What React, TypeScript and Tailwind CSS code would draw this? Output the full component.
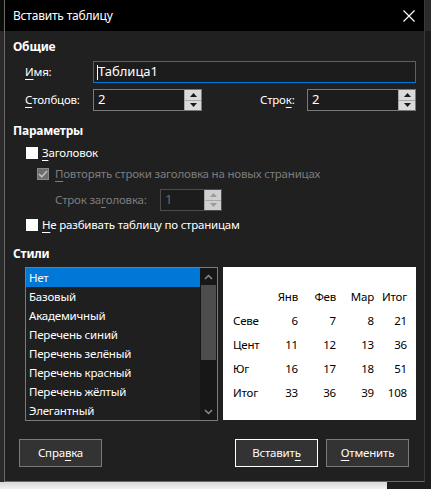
import React from 'react';

const font = { fontFamily: '"Noto Sans", "Open Sans", sans-serif' };

function U({ children }: { children: React.ReactNode }) {
  return <span className="underline underline-offset-[3px] decoration-1">{children}</span>;
}

function Arrow({ up, color }: { up?: boolean; color: string }) {
  return (
    <svg width="7" height="4" viewBox="0 0 7 4">
      {up ? <path d="M0 4 L3.5 0 L7 4 Z" fill={color} /> : <path d="M0 0 L3.5 4 L7 0 Z" fill={color} />}
    </svg>
  );
}

function Spin({ value, className, disabled }: { value: string; className: string; disabled?: boolean }) {
  return (
    <div
      className={`flex h-[22px] border bg-[#1c1c1c] ${disabled ? 'border-[#4d4d4d]' : 'border-[#7a7a7a]'} ${className}`}
    >
      <div className={`flex-1 flex items-center pl-[4px] text-[13px] ${disabled ? 'text-[#6a6a6a]' : 'text-white'}`}>
        {value}
      </div>
      <div className="w-[17px] flex flex-col gap-[1px] bg-[#a8a8a8] border-l border-[#a8a8a8]">
        <div className={`flex-1 flex items-center justify-center ${disabled ? 'bg-[#cfcfcf]' : 'bg-[#dadada]'}`}>
          <Arrow up color={disabled ? '#9a9a9a' : '#1a1a1a'} />
        </div>
        <div className={`flex-1 flex items-center justify-center ${disabled ? 'bg-[#cfcfcf]' : 'bg-[#dadada]'}`}>
          <Arrow color={disabled ? '#9a9a9a' : '#1a1a1a'} />
        </div>
      </div>
    </div>
  );
}

const styles = [
  'Нет',
  'Базовый',
  'Академичный',
  'Перечень синий',
  'Перечень зелёный',
  'Перечень красный',
  'Перечень жёлтый',
  'Элегантный',
];

const table = [
  ['', 'Янв', 'Фев', 'Мар', 'Итог'],
  ['Севе', '6', '7', '8', '21'],
  ['Цент', '11', '12', '13', '36'],
  ['Юг', '16', '17', '18', '51'],
  ['Итог', '33', '36', '39', '108'],
];

function Button({ children, primary, className = '' }: { children: React.ReactNode; primary?: boolean; className?: string }) {
  return (
    <button
      className={`w-[83px] h-[28px] bg-[#333333] text-white text-[11.5px] tracking-[-0.2px] border ${primary ? 'border-white' : 'border-[#7a7a7a]'} ${className}`}
    >
      {children}
    </button>
  );
}

export default function App() {
  return (
    <div className="relative w-[431px] h-[489px] overflow-hidden bg-[#1c1c1c]" style={font}>
      {/* desktop behind */}
      <div className="absolute left-0 top-0 w-[4px] h-[31px] bg-[#0c0c0c]" />
      <div className="absolute left-0 top-[31px] w-[4px] h-[451px] bg-[#2a2a2a]" />
      <div className="absolute left-0 top-[482px] w-[387px] h-[7px] bg-gradient-to-b from-[#d8d8d8] to-[#f0f0f0]" />
      <div className="absolute left-[425px] top-0 w-[6px] h-[31px] bg-[#2b2b2b]" />

      {/* window */}
      <div className="absolute left-[4px] top-0 w-[421px] h-[482px] flex flex-col bg-[#202020] border-l border-r border-b border-l-[#6a6a6a] border-b-[#6a6a6a] border-r-[#3a3a3a]">
        {/* title bar */}
        <div className="h-[31px] bg-black flex items-center justify-between pl-[8px] pr-[9px]">
          <span className="text-white text-[12px] tracking-[-0.2px]">Вставить таблицу</span>
          <svg width="12" height="12" viewBox="0 0 12 12">
            <path d="M0.5 0.5 L11.5 11.5 M11.5 0.5 L0.5 11.5" stroke="white" strokeWidth="1.2" />
          </svg>
        </div>

        <div className="flex flex-col text-white text-[11.5px] tracking-[-0.2px]">
          <div className="h-[20px] mt-[6px] ml-[8px] flex items-center font-bold text-[12px]">Общие</div>

          <div className="h-[22px] mt-[4px] ml-[20px] flex items-center">
            <span className="w-[68px]">
              <U>И</U>мя:
            </span>
            <div className="w-[323px] h-[22px] border border-[#0078d7] bg-[#1c1c1c] flex items-center pl-[3px] text-[13px] tracking-normal">
              <span className="w-[1px] h-[15px] bg-white" />
              Таблица1
            </div>
          </div>

          <div className="h-[22px] mt-[6px] ml-[20px] flex items-center">
            <span className="w-[68px]">
              <U>С</U>толбцов:
            </span>
            <Spin value="2" className="w-[109px]" />
            <span className="ml-[58px] w-[47px]">
              Стро<U>к</U>:
            </span>
            <Spin value="2" className="w-[109px]" />
          </div>

          <div className="h-[20px] mt-[10px] ml-[8px] flex items-center font-bold text-[12px]">Параметры</div>

          <div className="h-[18px] mt-[3px] ml-[21px] flex items-center">
            <span className="w-[12px] h-[12px] bg-white" />
            <span className="ml-[4px]">
              <U>З</U>аголовок
            </span>
          </div>

          <div className="h-[18px] mt-[3px] ml-[32px] flex items-center text-[#7d7d7d]">
            <span className="w-[12px] h-[12px] bg-[#6e6e6e] border border-[#8a8a8a] flex items-center justify-center">
              <svg width="10" height="8" viewBox="0 0 10 8">
                <path d="M1 4 L3.8 6.8 L9 1" stroke="#c8c8c8" strokeWidth="1.3" fill="none" />
              </svg>
            </span>
            <span className="ml-[6px]">
              <U>П</U>овторять строки заголовка на новых страницах
            </span>
          </div>

          <div className="h-[22px] mt-[6px] ml-[50px] flex items-center text-[#7d7d7d]">
            <span className="w-[105px]">
              Строк за<U>г</U>оловка:
            </span>
            <Spin value="1" className="w-[62px]" disabled />
          </div>

          <div className="h-[18px] mt-[5px] ml-[21px] flex items-center">
            <span className="w-[12px] h-[12px] bg-white" />
            <span className="ml-[4px]">
              <U>Н</U>е разбивать таблицу по страницам
            </span>
          </div>

          <div className="h-[20px] mt-[10px] ml-[8px] flex items-center font-bold text-[12px]">Стили</div>

          <div className="h-[154px] mt-[3px] ml-[20px] flex gap-[5px]">
            {/* list */}
            <div className="w-[193px] h-[154px] border border-[#7a7a7a] bg-[#1f1f1f] flex">
              <div className="flex-1 flex flex-col">
                {styles.map((s, i) => (
                  <div
                    key={s}
                    className={`h-[19px] flex items-center pl-[3px] ${i === 0 ? 'bg-[#0078d7]' : ''}`}
                  >
                    {s}
                  </div>
                ))}
              </div>
              <div className="w-[17px] bg-[#171717] flex flex-col items-center">
                <div className="h-[17px] flex items-center justify-center">
                  <svg width="9" height="6" viewBox="0 0 9 6">
                    <path d="M1 5 L4.5 1.5 L8 5" stroke="#8a8a8a" strokeWidth="1.5" fill="none" />
                  </svg>
                </div>
                <div className="w-[15px] h-[75px] bg-[#4d4d4d]" />
                <div className="flex-1" />
                <div className="h-[17px] flex items-center justify-center">
                  <svg width="9" height="6" viewBox="0 0 9 6">
                    <path d="M1 1 L4.5 4.5 L8 1" stroke="#8a8a8a" strokeWidth="1.5" fill="none" />
                  </svg>
                </div>
              </div>
            </div>

            {/* preview */}
            <div className="w-[193px] h-[153px] bg-white pt-[18px] pl-[10px] text-black">
              <div className="grid grid-cols-[27px_38px_38px_38px_33px]">
                {table.map((row, r) =>
                  row.map((c, ci) => (
                    <div
                      key={`${r}-${ci}`}
                      className={`h-[24px] flex items-center ${ci === 0 ? 'justify-start' : 'justify-end'}`}
                    >
                      {c}
                    </div>
                  ))
                )}
              </div>
            </div>
          </div>

          <div className="h-[28px] mt-[18px] ml-[14px] flex">
            <Button>
              Спра<U>в</U>ка
            </Button>
            <Button primary className="ml-[133px]">
              Вставит<U>ь</U>
            </Button>
            <Button className="ml-[8px]">
              <U>О</U>тменить
            </Button>
          </div>
        </div>
      </div>
    </div>
  );
}
